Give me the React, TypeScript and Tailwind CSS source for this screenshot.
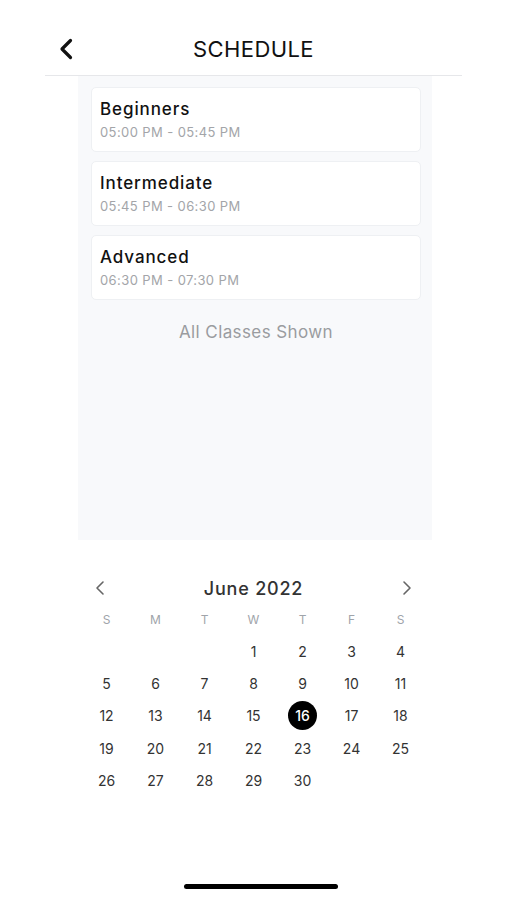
import React from "react";

const classes = [
  { name: "Beginners", time: "05:00 PM - 05:45 PM" },
  { name: "Intermediate", time: "05:45 PM - 06:30 PM" },
  { name: "Advanced", time: "06:30 PM - 07:30 PM" },
];

const weekDays = ["S", "M", "T", "W", "T", "F", "S"];

// June 2022 starts on a Wednesday
const days: (number | null)[] = [null, null, null, ...Array.from({ length: 30 }, (_, i) => i + 1)];

export default function App() {
  const selected = 16;

  return (
    <div
      className="w-[507px] h-[900px] bg-white flex flex-col overflow-hidden"
      style={{ fontFamily: "Inter, 'Noto Sans', sans-serif" }}
    >
      {/* Header */}
      <div className="mx-[45px] h-[76px] pt-[30px] border-b border-[#e6e7ea] relative flex justify-center">
        <button className="absolute left-[12px] top-[38px] w-[18px] h-[22px] flex items-center justify-center">
          <svg width="14" height="22" viewBox="0 0 14 22" fill="none">
            <path d="M11.5 2.5L3 11l8.5 8.5" stroke="#111" strokeWidth="3.2" strokeLinecap="round" strokeLinejoin="round" />
          </svg>
        </button>
        <h1 className="h-[38px] leading-[38px] text-[22px] font-normal text-[#111] tracking-[0.4px]">SCHEDULE</h1>
      </div>

      {/* Classes panel */}
      <div className="ml-[78px] w-[354px] h-[464px] bg-[#f8f9fb] pl-[13px] pr-[11px] pt-[11px] flex flex-col">
        <div className="flex flex-col gap-[9px]">
          {classes.map((c) => (
            <div
              key={c.name}
              className="h-[65px] bg-white rounded-[5px] border border-[#eef0f3] pl-[8px] pt-[10px] flex flex-col"
            >
              <span className="text-[17px] leading-[22px] font-medium text-[#111] tracking-[0.9px]">{c.name}</span>
              <span className="mt-[3px] text-[13px] leading-[18px] text-[#a3a5a9] tracking-[0.4px]">{c.time}</span>
            </div>
          ))}
        </div>
        <p className="mt-[20px] text-center text-[17px] leading-[24px] text-[#9a9ca0] tracking-[0.4px]">All Classes Shown</p>
      </div>

      {/* Calendar */}
      <div className="mt-[32px] ml-[82px] w-[343px] flex flex-col">
        <div className="h-[32px] flex items-center justify-between px-[13px]">
          <svg width="10" height="16" viewBox="0 0 10 16" fill="none">
            <path d="M8 2L2 8l6 6" stroke="#666" strokeWidth="1.6" strokeLinecap="round" strokeLinejoin="round" />
          </svg>
          <span className="text-[18px] font-medium text-[#333] tracking-[0.8px]">June 2022</span>
          <svg width="10" height="16" viewBox="0 0 10 16" fill="none">
            <path d="M2 2l6 6-6 6" stroke="#666" strokeWidth="1.6" strokeLinecap="round" strokeLinejoin="round" />
          </svg>
        </div>
        <div className="grid grid-cols-7 h-[31px] items-center">
          {weekDays.map((d, i) => (
            <span key={i} className="text-center text-[12px] text-[#a0a4aa]">{d}</span>
          ))}
        </div>
        <div className="grid grid-cols-7 auto-rows-[32.3px]">
          {days.map((d, i) => (
            <div key={i} className="flex items-center justify-center">
              {d === null ? null : d === selected ? (
                <span className="w-[29px] h-[29px] rounded-full bg-black text-white flex items-center justify-center text-[14px] font-medium">
                  {d}
                </span>
              ) : (
                <span className="text-[14px] text-[#333]">{d}</span>
              )}
            </div>
          ))}
        </div>
      </div>

      {/* Home indicator */}
      <div className="mt-auto mb-[11px] ml-[184px] w-[154px] h-[5px] rounded-full bg-black" />
    </div>
  );
}
